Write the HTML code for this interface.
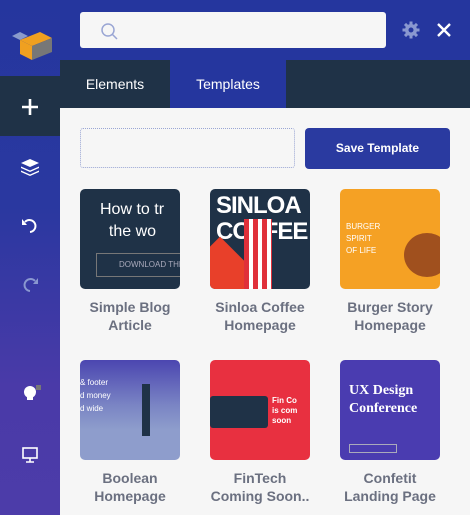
<!DOCTYPE html>
<html><head><style>
*{margin:0;padding:0;box-sizing:border-box}
body{width:470px;height:515px;overflow:hidden;background:#f6f6f6;font-family:"Liberation Sans",sans-serif;position:relative}
.abs{position:absolute}
.side{left:0;top:0;width:60px;height:515px;background:linear-gradient(#25369e 0,#2a38a0 40%,#4a3aa8 75%,#4c3ca9 100%)}
.card{position:absolute;width:100px;height:100px;border-radius:5px;overflow:hidden}
.lbl{position:absolute;width:130px;text-align:center;font-weight:bold;font-size:14px;line-height:18px;color:#6b7080}
</style></head><body>
<div class="abs side"></div>
<div class="abs" style="left:60px;top:0;width:410px;height:108px;background:#25369e"></div>
<div class="abs" style="left:0;top:76px;width:60px;height:60px;background:#1f3247"></div>
<div class="abs" style="left:60px;top:60px;width:110px;height:48px;background:#1f3247"></div>
<div class="abs" style="left:286px;top:60px;width:184px;height:48px;background:#1f3247"></div>
<div class="abs" style="left:60px;top:108px;width:410px;height:407px;background:#f6f6f6"></div>
<!-- logo -->
<svg class="abs" style="left:10px;top:28px" width="44" height="36" viewBox="0 0 44 36"><polygon points="2,8 10,4 18,8 10,12" fill="#8a9acb"/><polygon points="10,12 30,4 42,10 22,18" fill="#f0a020"/><polygon points="10,12 22,18 22,32 10,26" fill="#f0a020"/><polygon points="22,18 42,10 42,24 22,32" fill="#777"/></svg>
<div class="abs" style="left:80px;top:12px;width:306px;height:36px;background:#f6f6f6;border-radius:3px"></div>
<svg class="abs" style="left:100px;top:22px" width="20" height="18"><circle cx="8" cy="8" r="6" fill="none" stroke="#9aa6d4" stroke-width="1.5"/><line x1="12.5" y1="12.5" x2="17" y2="17" stroke="#9aa6d4" stroke-width="1.5"/></svg>
<svg class="abs" style="left:402px;top:21px" width="18" height="18" viewBox="0 0 18 18"><g fill="#8a98d0"><circle cx="9" cy="9" r="6"/><rect x="7.5" y="0.5" width="3" height="17"/><rect x="0.5" y="7.5" width="17" height="3"/><rect x="7.5" y="0.5" width="3" height="17" transform="rotate(45 9 9)"/><rect x="7.5" y="0.5" width="3" height="17" transform="rotate(-45 9 9)"/></g><circle cx="9" cy="9" r="2.5" fill="#25369e"/></svg>
<svg class="abs" style="left:436px;top:22px" width="16" height="16"><path d="M2 2L14 14M14 2L2 14" stroke="#fff" stroke-width="2.4"/></svg>
<div class="abs" style="left:60px;top:76px;width:110px;text-align:center;color:#fff;font-size:14px">Elements</div>
<div class="abs" style="left:170px;top:76px;width:116px;text-align:center;color:#fff;font-size:14px">Templates</div>
<!-- sidebar icons -->
<svg class="abs" style="left:20px;top:97px" width="20" height="20"><path d="M10 2V18M2 10H18" stroke="#fff" stroke-width="2.6"/></svg>
<svg class="abs" style="left:20px;top:157px" width="20" height="20" viewBox="0 0 20 20" fill="#fff"><path d="M10 2L19 6 10 10 1 6Z"/><path d="M1 9.5L10 13.5 19 9.5 19 11 10 15 1 11Z"/><path d="M1 13.5L10 17.5 19 13.5 19 15 10 19 1 15Z"/></svg>
<svg class="abs" style="left:20px;top:216px" width="20" height="20"><path d="M5 6A6 6 0 1 1 10 16" fill="none" stroke="#fff" stroke-width="2"/><path d="M2 3L7 9 2 9Z" fill="#fff"/></svg>
<svg class="abs" style="left:20px;top:275px" width="20" height="20"><path d="M15 6A6 6 0 1 0 10 16" fill="none" stroke="#8a98d0" stroke-width="2"/><path d="M18 3L13 9 18 9Z" fill="#8a98d0"/></svg>
<svg class="abs" style="left:20px;top:382px" width="24" height="22"><circle cx="10" cy="10" r="6" fill="#fff"/><rect x="7" y="14" width="6" height="4" fill="#fff"/><rect x="16" y="3" width="5" height="5" fill="#777"/></svg>
<svg class="abs" style="left:21px;top:446px" width="18" height="18"><rect x="2" y="2" width="14" height="10" fill="none" stroke="#fff" stroke-width="1.6"/><path d="M9 12V16M5 16H13" stroke="#fff" stroke-width="1.6"/></svg>
<!-- toolbar -->
<div class="abs" style="left:80px;top:128px;width:215px;height:40px;border:1px dotted #9aa6d4;border-radius:3px"></div>
<div class="abs" style="left:305px;top:128px;width:145px;height:41px;background:#2a3aa0;border-radius:4px;color:#fff;font-weight:bold;font-size:12px;line-height:41px;text-align:center">Save Template</div>
<!-- row1 -->
<div class="card" style="left:80px;top:189px;background:#1f3247"><div style="position:absolute;left:20px;top:10px;color:#fff;font-size:16px;line-height:22px;white-space:nowrap">How to tr<br>&nbsp;&nbsp;the wo</div><div style="position:absolute;left:16px;top:64px;width:100px;height:24px;border:1px solid #777;color:#aab;font-size:8px;line-height:22px;padding-left:22px">DOWNLOAD THE</div></div>
<div class="card" style="left:210px;top:189px;background:#1f3247"><div style="position:absolute;left:6px;top:4px;color:#fff;font-weight:bold;font-size:24px;line-height:26px;letter-spacing:-1px">SINLOA<br>COFFEE</div><div style="position:absolute;left:-20px;top:60px;width:60px;height:60px;background:#e8402a;transform:rotate(45deg)"></div><div style="position:absolute;left:34px;top:30px;width:28px;height:70px;background:repeating-linear-gradient(90deg,#e0303a 0 5px,#fff 5px 9px)"></div></div>
<div class="card" style="left:340px;top:189px;background:#f5a124"><div style="position:absolute;left:6px;top:32px;color:#fff;font-size:8px;line-height:12px">BURGER<br>SPIRIT<br>OF LIFE</div><div style="position:absolute;left:64px;top:44px;width:46px;height:44px;border-radius:50%;background:#a0501e"></div></div>
<div class="lbl" style="left:65px;top:298px">Simple Blog<br>Article</div>
<div class="lbl" style="left:195px;top:298px">Sinloa Coffee<br>Homepage</div>
<div class="lbl" style="left:325px;top:298px">Burger Story<br>Homepage</div>
<!-- row2 -->
<div class="card" style="left:80px;top:360px;background:linear-gradient(#4b46b0 0,#7a84c4 45%,#8e9dcc 70%)"><div style="position:absolute;left:0;top:16px;color:#fff;font-size:8px;line-height:13px">&amp; footer<br>d money<br>d wide</div><div style="position:absolute;left:62px;top:24px;width:8px;height:52px;background:#1f3247"></div></div>
<div class="card" style="left:210px;top:360px;background:#e83040"><div style="position:absolute;left:0;top:36px;width:58px;height:32px;background:#1f3247;border-radius:3px"></div><div style="position:absolute;left:62px;top:36px;color:#fff;font-size:8px;font-weight:bold;line-height:10px">Fin Co<br>is com<br>soon</div></div>
<div class="card" style="left:340px;top:360px;background:#4a3cb0"><div style="position:absolute;left:9px;top:22px;color:#fff;font-family:'Liberation Serif',serif;font-weight:bold;font-size:14px;line-height:18px">UX Design<br>Conference</div><div style="position:absolute;left:9px;top:84px;width:48px;height:9px;border:1px solid #aab"></div></div>
<div class="lbl" style="left:65px;top:469px">Boolean<br>Homepage</div>
<div class="lbl" style="left:195px;top:469px">FinTech<br>Coming Soon..</div>
<div class="lbl" style="left:325px;top:469px">Confetit<br>Landing Page</div>
</body></html>
